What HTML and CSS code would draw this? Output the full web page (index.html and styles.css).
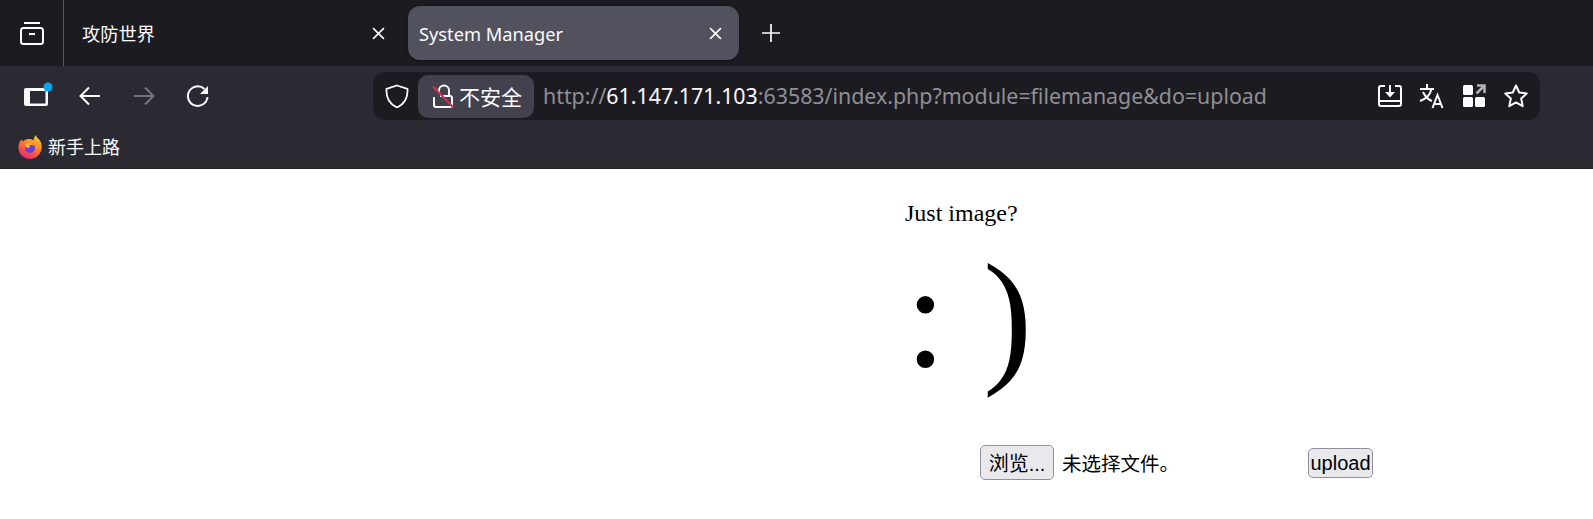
FILE: index.html
```html
<!DOCTYPE html>
<html lang="zh-CN">
<head>
    <meta charset="UTF-8">
    <meta name="viewport" content="width=device-width, initial-scale=1.0">
    <title>System Manager</title>
    <link rel="stylesheet" href="styles.css">
</head>
<body>
    <!-- Barra de abas -->
    <div class="tabbar">
        <div class="tab-start">
            <svg class="icon" viewBox="0 0 24 24" fill="none" stroke="#fbfbfe" stroke-width="2"><path d="M4 2h16"/><rect x="1" y="7" width="22" height="16" rx="2.500"/><path d="M9 13h6"/></svg>
        </div>
        <div class="tab">
            <span class="tab-title">攻防世界</span>
            <svg class="close" viewBox="0 0 12 12" stroke="#fbfbfe" stroke-width="1.5"><path d="M1 1l10 10M11 1L1 11"/></svg>
        </div>
        <div class="tab active">
            <span class="tab-title">System Manager</span>
            <svg class="close" viewBox="0 0 12 12" stroke="#fbfbfe" stroke-width="1.5"><path d="M1 1l10 10M11 1L1 11"/></svg>
        </div>
        <svg class="plus" viewBox="0 0 18 18" stroke="#fbfbfe" stroke-width="1.7"><path d="M9 0v18M0 9h18"/></svg>
    </div>

    <!-- Barra de navegação -->
    <div class="navbar">
        <div class="nav-btn">
            <svg class="icon" viewBox="0 0 24 24" fill="none"><rect x="0" y="4" width="24" height="18" rx="2" fill="#fbfbfe"/><rect x="6" y="7" width="15.500" height="12.500" fill="#2b2a33"/><circle cx="24" cy="3" r="4.500" fill="#00a6ee"/></svg>
        </div>
        <div class="nav-btn">
            <svg class="icon" viewBox="0 0 24 24" fill="none" stroke="#fbfbfe" stroke-width="2"><path d="M22 12H2M11 3.500 2.500 12l8.500 8.500"/></svg>
        </div>
        <div class="nav-btn">
            <svg class="icon" viewBox="0 0 24 24" fill="none" stroke="#75747b" stroke-width="2"><path d="M2 12h20M13 3.500 21.500 12 13 20.500"/></svg>
        </div>
        <div class="nav-btn">
            <svg class="icon" viewBox="0 0 24 24" fill="none" stroke="#fbfbfe" stroke-width="2"><path d="M21.500 13a9.800 9.800 0 1 1-3-8"/><path d="M22 2v8h-8z" fill="#fbfbfe" stroke="none"/></svg>
        </div>

        <div class="urlbar">
            <svg class="shield" viewBox="0 0 24 24" fill="none" stroke="#fbfbfe" stroke-width="1.800"><path d="M12 1.500 22.500 5c.5 8-1.500 14.500-10.500 18.500C3 19.500 1 13 1.500 5z"/></svg>
            <div class="badge">
                <svg class="lock" viewBox="0 0 22 24" fill="none"><path d="M8 9V6.500a5 5 0 0 1 10 0V12" stroke="#fbfbfe" stroke-width="2"/><path d="M9 12H19a2 2 0 0 1 2 2v7a2 2 0 0 1-2 2H5a2 2 0 0 1-2-2V13" stroke="#fbfbfe" stroke-width="2"/><path d="M2 2.500 22 23" stroke="#e22850" stroke-width="2"/></svg>
                <span>不安全</span>
            </div>
            <div class="url">http://<b>61.147.171.103</b>:63583/index.php?module=filemanage&amp;do=upload</div>
            <div class="url-icons">
                <svg class="icon" viewBox="0 0 24 24" fill="none" stroke="#fbfbfe" stroke-width="2"><path d="M7 2H3a2 2 0 0 0-2 2V20a2 2 0 0 0 2 2h18a2 2 0 0 0 2-2V4a2 2 0 0 0-2-2h-4M1 17h22M12 1v8"/><path d="M7 8h10l-5 5.500z" fill="#fbfbfe" stroke="none"/></svg>
                <svg class="icon" viewBox="0 0 24 24" fill="none" stroke="#fbfbfe" stroke-width="2"><path d="M0 5h14M7 0v5M11.500 5C10 11 6 15 0 17M3 8c2 4 6 8 9 9M12.500 24l5-13 5 13M14.500 20h6"/></svg>
                <svg class="icon" viewBox="0 0 24 24"><rect x="1" y="1" width="10" height="10" rx="1.500" fill="#fbfbfe"/><rect x="1" y="13" width="10" height="10" rx="1.500" fill="#fbfbfe"/><rect x="13" y="13" width="10" height="10" rx="1.500" fill="#fbfbfe"/><path d="M15 1.500h7.500V9M22 2 14.500 9.500" fill="none" stroke="#b5b5b9" stroke-width="2.500"/></svg>
                <svg class="icon" viewBox="0 0 24 24" fill="none" stroke="#fbfbfe" stroke-width="2" stroke-linejoin="round"><path d="M12 1.500l3.200 7 7.500.9-5.500 5.200 1.500 7.600-6.700-3.800-6.700 3.800 1.500-7.600L1.300 9.400l7.500-.9z"/></svg>
            </div>
        </div>
    </div>

    <!-- Favoritos -->
    <div class="bookmarks">
        <svg class="fox" viewBox="0 0 24 24">
            <defs>
                <linearGradient id="fogo" x1="0.8" y1="0" x2="0.3" y2="1">
                    <stop offset="0" stop-color="#ffd02e"/>
                    <stop offset="0.5" stop-color="#ff7a2e"/>
                    <stop offset="1" stop-color="#e81e74"/>
                </linearGradient>
            </defs>
            <path d="M1 9c.5-2 1.500-3.500 3-4.500 0 1 .5 1.500 1 2C7 4.500 9 4 11 4c2 0 3.500.5 4.500 1.500C15.500 3.500 16.500 1.500 18 0c0 2.500 3 3.500 4.500 6.500C23.500 9 24 11 23.500 14c-1 6-6 10-11.500 10C5.500 24 .5 19 .5 13c0-1.500 0-3 .5-4z" fill="url(#fogo)"/>
            <circle cx="12" cy="13" r="5" fill="#6b3fd6"/>
            <path d="M7 9c3-2 8-1.500 9 1.500-2-1-4-1-5 0 2 .5 1 2-1 2.500C8 13 7 11 7 9z" fill="#ffb03a"/>
        </svg>
        <span>新手上路</span>
    </div>

    <!-- Conteúdo da página -->
    <div class="page">
        <p class="just">Just image?</p>
        <div class="smile">: )</div>
        <form class="upload-form" onsubmit="return false">
            <button type="button" class="btn browse">浏览...</button>
            <span class="no-file">未选择文件。</span>
            <button type="submit" class="btn upload">upload</button>
        </form>
    </div>
</body>
</html>
```

FILE: styles.css
```css
body {
    margin: 0;
    background: #fff;
    color: #000;
    font-family: "Liberation Serif", "Noto Sans CJK SC", serif;
    overflow: hidden;
}

.icon {
    width: 24px;
    height: 24px;
    flex: none;
    overflow: visible;
}

/* abas */
.tabbar {
    display: flex;
    align-items: center;
    height: 66px;
    background: #1c1b22;
    color: #fbfbfe;
    font-family: "Noto Sans", "Noto Sans CJK SC", sans-serif;
    font-size: 18.250px;
}

.tab-start {
    display: flex;
    align-items: center;
    justify-content: center;
    width: 63px;
    height: 66px;
    border-right: 1px solid #55545b;
}

.tab {
    display: flex;
    align-items: center;
    justify-content: space-between;
    box-sizing: border-box;
    width: 344px;
    height: 54px;
    padding: 0 23px 0 18px;
}

.tab.active {
    width: 331px;
    padding: 0 17px 0 11px;
    background: #52525e;
    border-radius: 12px;
    box-shadow: 0 1px 3px rgba(0, 0, 0, 0.4);
}

.close {
    width: 13px;
    height: 13px;
}

.plus {
    width: 18px;
    height: 18px;
    margin-left: 23px;
}

/* navegação */
.navbar {
    display: flex;
    align-items: center;
    box-sizing: border-box;
    height: 60px;
    padding: 0 53px 0 9px;
    background: #2b2a33;
}

.nav-btn {
    display: flex;
    justify-content: center;
    width: 54px;
}

.urlbar {
    display: flex;
    align-items: center;
    flex: 1;
    height: 48px;
    margin-left: 148px;
    padding: 0 12px;
    background: #1c1b22;
    border-radius: 12px;
    font-family: "Noto Sans", "Noto Sans CJK SC", sans-serif;
}

.shield {
    width: 24px;
    height: 24px;
    flex: none;
}

.badge {
    display: flex;
    align-items: center;
    gap: 6px;
    height: 43px;
    margin-left: 9px;
    padding: 0 12px 0 13px;
    background: #42414d;
    border-radius: 10px;
    color: #fbfbfe;
    font-size: 21px;
}

.lock {
    width: 22px;
    height: 24px;
}

.url {
    flex: 1;
    margin-left: 9px;
    padding-bottom: 2px;
    color: #8f8f94;
    font-size: 21.350px;
    white-space: nowrap;
}

.url b {
    font-weight: normal;
    color: #fbfbfe;
}

.url-icons {
    display: flex;
    gap: 18px;
}

/* favoritos */
.bookmarks {
    display: flex;
    align-items: center;
    gap: 6px;
    height: 42px;
    padding-left: 18px;
    background: #2b2a33;
    border-bottom: 1px solid #24232b;
    color: #fbfbfe;
    font-family: "Noto Sans CJK SC", sans-serif;
    font-size: 18px;
}

.bookmarks span {
    padding-bottom: 2px;
}

.fox {
    width: 24px;
    height: 24px;
}

/* página */
.page {
    padding: 30px 0 0 905px;
}

.just {
    margin: 0;
    font-size: 24px;
    line-height: 28px;
}

.smile {
    margin-top: 4px;
    font-size: 148px;
    line-height: 170px;
}

.upload-form {
    display: flex;
    align-items: center;
    margin: 44px 0 0 75px;
    font-family: "Noto Sans CJK SC", sans-serif;
    font-size: 19.500px;
}

.btn {
    box-sizing: border-box;
    padding: 0;
    color: #000;
    background: #e9e9ed;
    border: 1px solid #8f8f9d;
    border-radius: 5px;
    font-family: "Liberation Sans", "Noto Sans CJK SC", sans-serif;
    font-size: 20px;
}

.browse {
    width: 74px;
    height: 35px;
}

.no-file {
    margin-left: 8px;
    width: 246px;
}

.upload {
    width: 65px;
    height: 30px;
    padding-top: 2px;
}
```
